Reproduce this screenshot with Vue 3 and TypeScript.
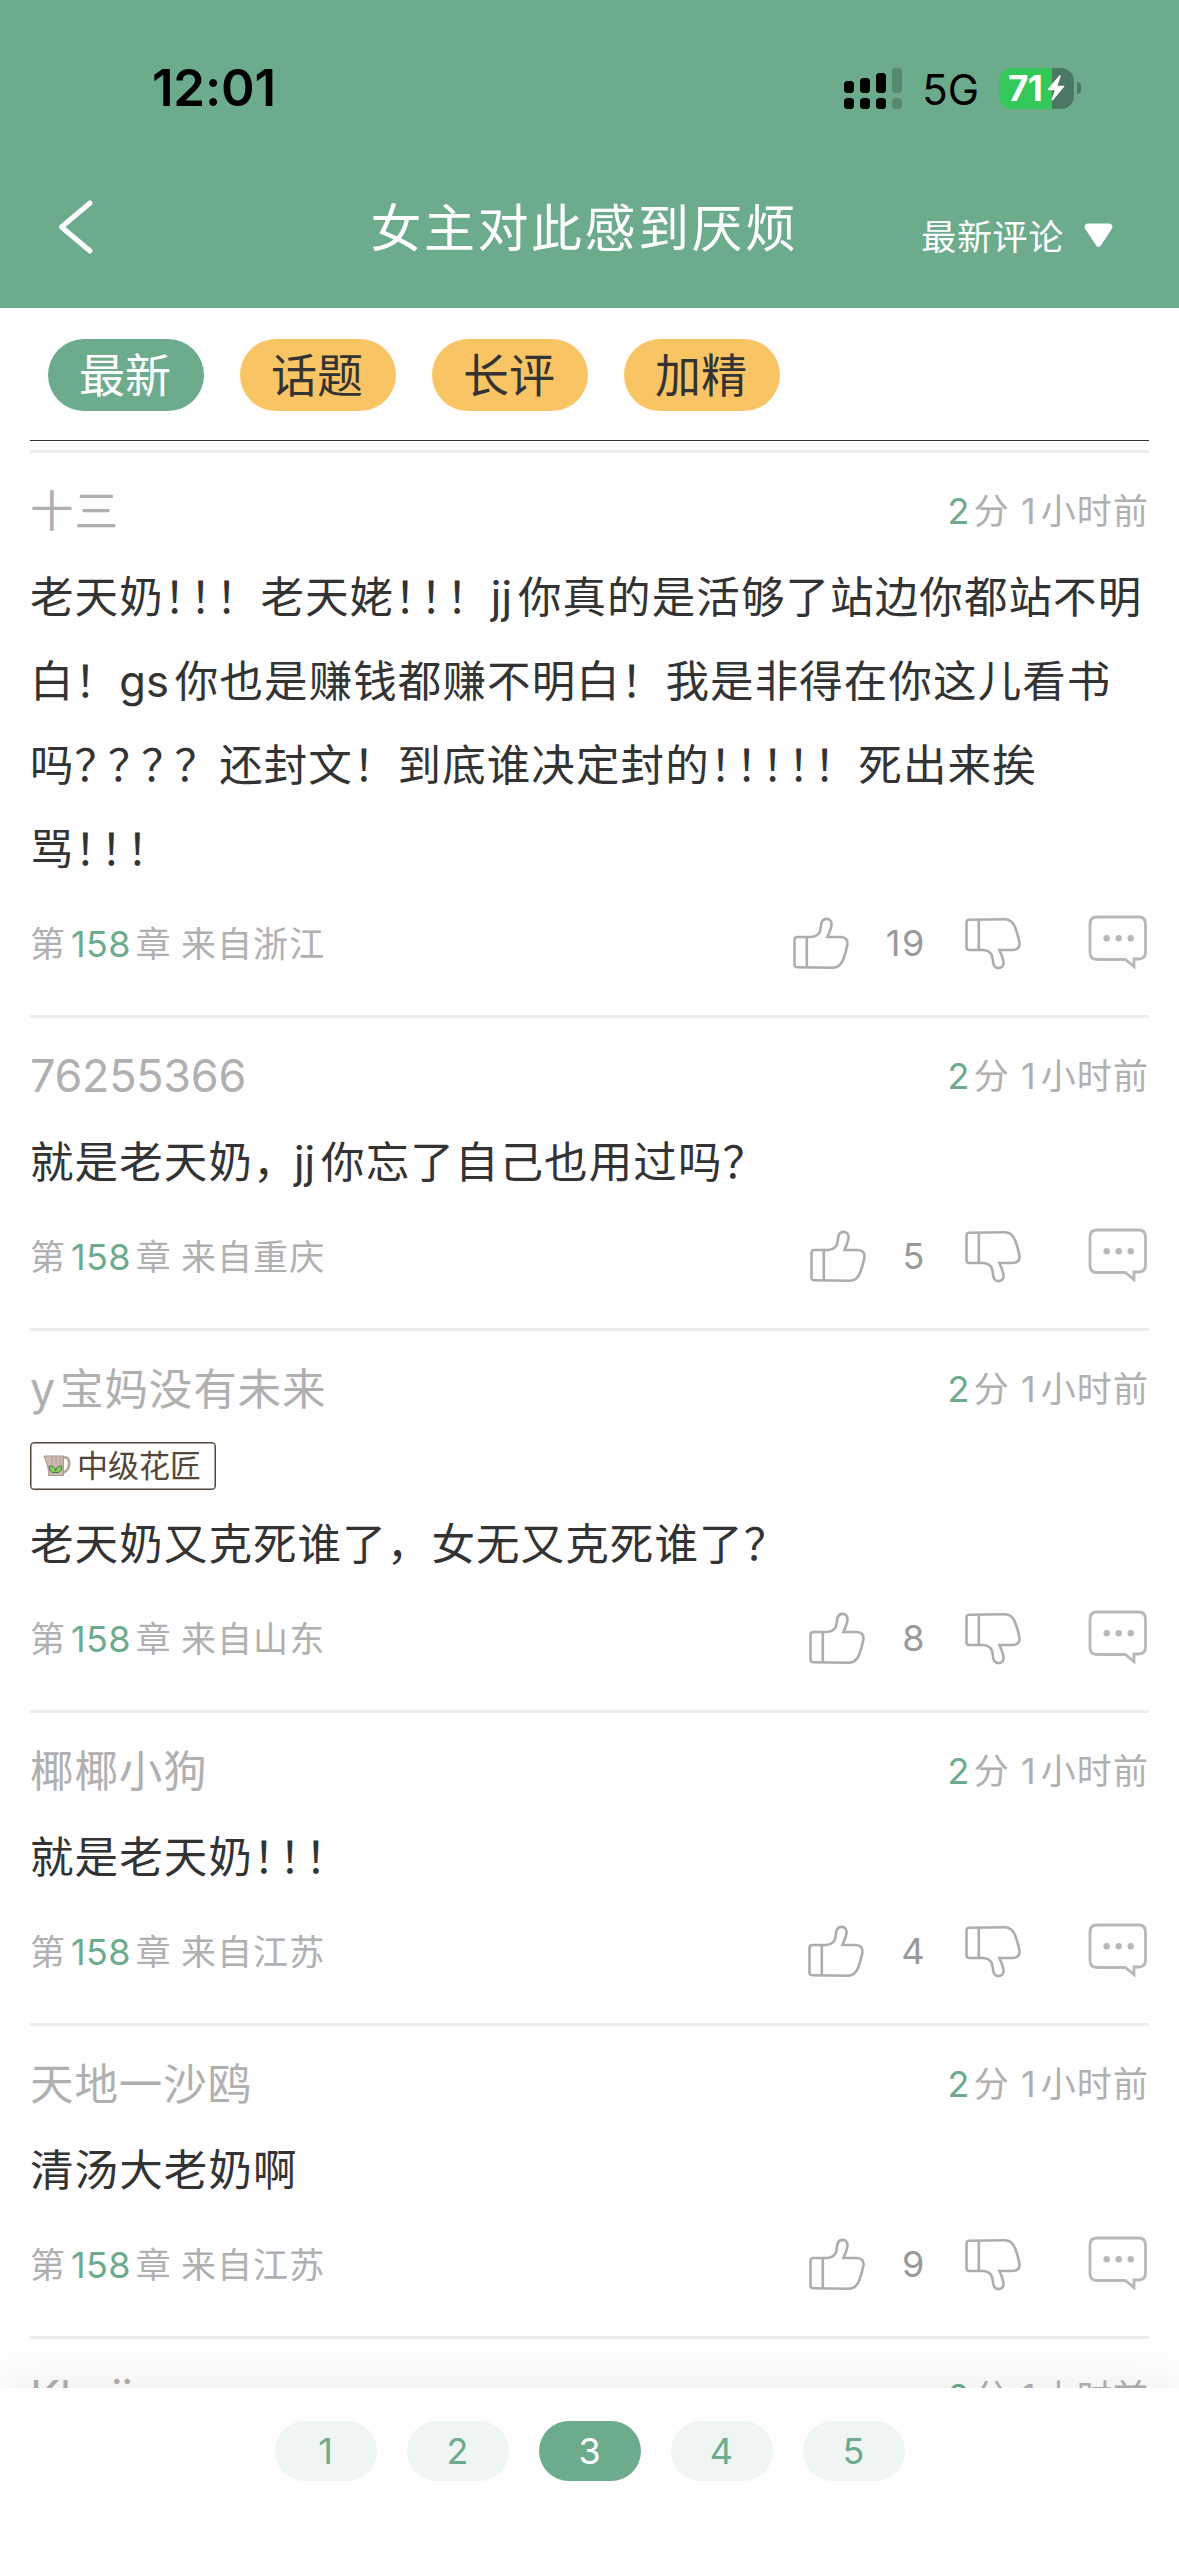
<script setup lang="ts">
interface Comment {
  name: string
  badge?: string
  lines: string[]
  place: string
  likes: number
}

interface Run {
  text: string
  kind: string
}

const tabs: string[] = ['最新', '话题', '长评', '加精']
const activeTab = 0
const pages: number[] = [1, 2, 3, 4, 5]
const currentPage = 3

const comments: Comment[] = [
  {
    name: '十三',
    lines: [
      '老天奶！！！老天姥！！！jj你真的是活够了站边你都站不明',
      '白！gs你也是赚钱都赚不明白！我是非得在你这儿看书',
      '吗？？？？还封文！到底谁决定封的！！！！！死出来挨',
      '骂！！！',
    ],
    place: '浙江',
    likes: 19,
  },
  { name: '76255366', lines: ['就是老天奶，jj你忘了自己也用过吗？'], place: '重庆', likes: 5 },
  {
    name: 'y宝妈没有未来',
    badge: '中级花匠',
    lines: ['老天奶又克死谁了，女无又克死谁了？'],
    place: '山东',
    likes: 8,
  },
  { name: '椰椰小狗', lines: ['就是老天奶！！！'], place: '江苏', likes: 4 },
  { name: '天地一沙鸥', lines: ['清汤大老奶啊'], place: '江苏', likes: 9 },
  { name: 'Khaij', lines: [''], place: '江苏', likes: 0 },
]

// Splits text so repeated full-width marks and Latin words get their own spacing.
function runs(text: string): Run[] {
  const parts =
    text.match(/！+(?=！)|？+(?=？)|，(?=[A-Za-z])|[A-Za-z0-9]+|[^A-Za-z0-9！？，]+|[！？，]/g) ?? []
  return parts.map((part, i) => {
    const next = parts[i + 1] ?? ''
    if (/^[A-Za-z0-9]/.test(part)) return { text: part, kind: 'latin' }
    if (part === '，' && /^[A-Za-z]/.test(next)) return { text: part, kind: 'tight-comma' }
    const repeated = next[0] === part[0]
    if (part[0] === '！' && repeated) return { text: part, kind: 'tight-bang' }
    if (part[0] === '？' && repeated) return { text: part, kind: 'tight-ask' }
    return { text: part, kind: 'plain' }
  })
}
</script>

<template>
  <div class="screen">
    <header class="top">
      <div class="status">
        <span class="clock">12:01</span>
        <div class="indicators">
          <svg class="signal" width="58" height="41" viewBox="0 0 58 41">
            <rect x="0" y="13" width="10" height="12" rx="3.5" />
            <rect x="16" y="10" width="10" height="15" rx="3.5" />
            <rect x="32" y="5" width="10" height="20" rx="3.5" />
            <rect x="48" y="0" width="10" height="25" rx="3.5" opacity=".2" />
            <rect x="0" y="30" width="10" height="11" rx="3.5" />
            <rect x="16" y="30" width="10" height="11" rx="3.5" />
            <rect x="32" y="30" width="10" height="11" rx="3.5" />
            <rect x="48" y="30" width="10" height="11" rx="3.5" opacity=".2" />
          </svg>
          <span class="network">5G</span>
          <div class="battery">
            <div class="cell">
              <span class="level">71</span>
              <svg class="bolt" width="18" height="26" viewBox="0 0 18 26">
                <path d="M12.200 .600.900 14.100c-.4.600 0 1.100.6 1.100h6.300L4.700 24.300c-.3 1 .7 1.500 1.400.7L17.200 11.800c.4-.6 0-1.100-.6-1.100h-6.100L13.600 1.400C13.900.300 12.900-.2 12.200.600z" fill="#fff" />
              </svg>
            </div>
            <div class="nub"></div>
          </div>
        </div>
      </div>
      <div class="bar">
        <svg class="back" width="37" height="56" viewBox="0 0 37 56">
          <path d="M33 4 4.500 28 33 52" fill="none" stroke="#fff" stroke-width="5" stroke-linecap="round" stroke-linejoin="round" />
        </svg>
        <h1 class="title">女主对此感到厌烦</h1>
        <div class="sort">
          <span class="sort-label">最新评论</span>
          <svg width="29" height="25" viewBox="0 0 29 25">
            <path d="M4 .5h21c3 0 4.400 3 2.700 5.600L17 22.200c-1.300 2-3.700 2-5 0L1.300 6.100C-.4 3.500 1 .5 4 .5z" fill="#fff" />
          </svg>
        </div>
      </div>
    </header>

    <nav class="tabs">
      <span v-for="(tab, i) in tabs" :key="tab" class="tab" :class="{ active: i === activeTab }">{{ tab }}</span>
    </nav>

    <main class="list">
      <article v-for="c in comments" :key="c.name" class="comment">
        <div class="head">
          <span class="name"><span v-for="(r, i) in runs(c.name)" :key="i" :class="r.kind">{{ r.text }}</span></span>
          <span class="when"><b>2</b><span class="unit">分</span><span class="one">1</span>小时前</span>
        </div>
        <div v-if="c.badge" class="badge-row">
          <span class="badge">
            <svg width="28" height="22" viewBox="0 0 28 22">
              <path d="M20.500 2.500c4-1 6 2 5.600 6.500-.4 4.500-2.600 7.500-5.600 8.500" fill="none" stroke="#b9a79c" stroke-width="2.800" />
              <path d="M1 1h19.500v19.500H5.500C6 15 4.500 10 1 1z" fill="#cdbbb1" stroke="#a8978d" stroke-width="1" />
              <path d="M9 2v8M13 2v7M17 2v8" stroke="#a8978d" stroke-width=".8" />
              <path d="M12.500 17.500C8.500 18.500 5.800 15.500 6.300 11c4-.5 6 2 6.200 5 .5-3 2.500-5.500 6.200-5 .6 4-2 7.500-6.200 6.500z" fill="#8cc763" stroke="#3e6b31" stroke-width="1" />
            </svg>
            <span>{{ c.badge }}</span>
          </span>
        </div>
        <div class="body">
          <p v-for="(line, n) in c.lines" :key="n"><span v-for="(r, i) in runs(line)" :key="i" :class="r.kind">{{ r.text }}</span></p>
        </div>
        <div class="foot">
          <span class="source">第<b>158</b>章<span class="from">来自{{ c.place }}</span></span>
          <div class="actions">
            <svg width="57" height="53" viewBox="0 0 57 53" class="thumb">
              <path d="M4.500 20H18.500C24 19.500 27.500 16 27.800 10.300 28 5 30 1.900 33.500 1.900s5.500 2.700 4.900 6.600C37.800 12 36 16.500 34.400 20H48c4.500 0 7.200 3 6.400 7.500-.9 5-2.300 10-4.200 15-2 5.300-5.500 8.200-10.700 8.200L4.500 50.300c-2 0-3-1-3-3V23c0-2 1-3 3-3zM13.800 20v30.300" />
            </svg>
            <span class="likes">{{ c.likes }}</span>
            <svg width="57" height="53" viewBox="0 0 57 53" class="thumb down">
              <path d="M4.500 20H18.500C24 19.500 27.500 16 27.800 10.300 28 5 30 1.900 33.500 1.900s5.500 2.700 4.900 6.600C37.800 12 36 16.500 34.400 20H48c4.500 0 7.200 3 6.400 7.500-.9 5-2.300 10-4.200 15-2 5.300-5.500 8.200-10.700 8.200L4.500 50.300c-2 0-3-1-3-3V23c0-2 1-3 3-3zM13.800 20v30.300" />
            </svg>
            <svg width="60" height="54" viewBox="0 0 60 54" class="reply">
              <path d="M9 2h41.500c4.500 0 7 2.500 7 7v28c0 4.500-2.500 7-7 7H46v7.600L37.200 44.500H9c-4.500 0-7-2.500-7-7V9c0-4.500 2.500-7 7-7z" fill="none" stroke="#b8b8b8" stroke-width="2.800" />
              <circle cx="18.700" cy="23.300" r="3.200" />
              <circle cx="30.700" cy="23.300" r="3.200" />
              <circle cx="42.700" cy="23.300" r="3.200" />
            </svg>
          </div>
        </div>
      </article>
    </main>

    <footer class="pager">
      <span v-for="p in pages" :key="p" class="page" :class="{ current: p === currentPage }">{{ p }}</span>
    </footer>
  </div>
</template>

<style>
body {
  background: #fefefe;
}
</style>

<style scoped>
.screen {
  width: 1179px;
  height: 2556px;
  display: flex;
  flex-direction: column;
  overflow: hidden;
  background: #fefefe;
  color: #333;
  font-family: Inter, "Noto Sans CJK SC", sans-serif;
  text-spacing-trim: space-all;
}
.top {
  height: 308px;
  flex: none;
  background: #6dab8d;
}
.status {
  height: 176px;
  display: flex;
  justify-content: space-between;
  padding: 0 98px 0 152px;
  box-sizing: border-box;
  align-items: center;
  color: #000;
}
.clock {
  font-size: 51px;
  font-weight: 600;
  letter-spacing: -0.2px;
  padding-bottom: 2px;
}
.indicators {
  display: flex;
  align-items: center;
}
.network {
  font-size: 42px;
  font-weight: 400;
  letter-spacing: 0;
  line-height: 41px;
  margin: 2px 20px 0 20px;
}
.battery {
  display: flex;
  align-items: center;
}
.cell {
  width: 75px;
  height: 41px;
  box-sizing: border-box;
  border-radius: 13px;
  padding-left: 9px;
  display: flex;
  align-items: center;
  background: linear-gradient(90deg, #34c759 53px, #4c7863 53px);
}
.level {
  width: 39px;
  font-size: 35px;
  font-weight: 700;
  letter-spacing: -0.5px;
  line-height: 41px;
  color: #fff;
}
.nub {
  width: 4px;
  height: 12px;
  margin-left: 3px;
  border-radius: 0 4px 4px 0;
  background: #4c7863;
}
.bar {
  height: 132px;
  display: grid;
  grid-template-columns: 290px 1fr 300px;
  padding: 0 57px;
}
.back {
  margin-top: 23px;
}
.title {
  margin: 14px 0 0;
  text-align: center;
  font-size: 51px;
  line-height: 78px;
  font-weight: 400;
  letter-spacing: 2.500px;
  white-space: nowrap;
  color: #fff;
}
.sort {
  display: flex;
  justify-content: flex-end;
  align-items: center;
  height: 54px;
  margin: 32px 9px 0 0;
  gap: 20px;
  font-size: 35px;
  letter-spacing: 0.7px;
  color: #fff;
}
.sort-label {
  padding-bottom: 2px;
}
.tabs {
  flex: none;
  box-sizing: border-box;
  margin: 0 30px 9px;
  padding: 31px 18px 0;
  display: flex;
  gap: 36px;
  border-bottom: 1px solid #333;
  height: 133px;
}
.tab {
  width: 156px;
  height: 72px;
  border-radius: 36px;
  background: #f9c464;
  font-size: 46px;
  line-height: 72px;
  text-align: center;
  text-indent: -2px;
}
.tab.active {
  background: #6dab8d;
  color: #fff;
}
.list {
  flex: 1;
  min-height: 0;
  overflow: hidden;
  padding: 0 30px;
}
.comment {
  border-top: 3px solid #ececec;
}
.head {
  height: 102px;
  box-sizing: border-box;
  padding-top: 9px;
  display: flex;
  align-items: center;
  justify-content: space-between;
  color: #b0b0b0;
}
.name {
  font-size: 43.5px;
  line-height: 60px;
  letter-spacing: 0.9px;
  padding-top: 5px;
}
.name .latin {
  font-size: 45px;
  letter-spacing: -0.3px;
  margin-right: 5px;
}
.when,
.source {
  font-size: 35px;
  letter-spacing: 1.1px;
  white-space: nowrap;
}
.when b,
.source b {
  font-size: 36px;
  letter-spacing: 0.3px;
  font-weight: 400;
  color: #6dab8d;
  margin: 0 5px;
}
.when b {
  font-size: 36px;
  margin-right: 4px;
}
.one {
  margin: 0 4px 0 11px;
  font-size: 36px;
}
.from {
  margin-left: 9px;
}
.badge-row {
  height: 69px;
  box-sizing: border-box;
  padding-top: 9px;
  display: flex;
}
.badge {
  height: 48px;
  width: 186px;
  box-sizing: border-box;
  border: 1px solid #55463a;
  box-shadow: inset 0 0 0 0.5px #55463a;
  border-radius: 4px;
  padding-left: 12px;
  display: flex;
  align-items: center;
  gap: 6px;
  font-size: 31px;
  line-height: 44px;
  color: #55463a;
}
.body p {
  margin: 0;
  height: 84px;
  line-height: 84px;
  font-size: 43.5px;
  letter-spacing: 1.1px;
  white-space: nowrap;
}
.body .latin {
  letter-spacing: 0;
  margin-right: 6px;
}
.tight-bang {
  letter-spacing: -17.500px;
}
.tight-ask {
  letter-spacing: -10.200px;
}
.tight-comma {
  letter-spacing: -2.500px;
}
.foot {
  height: 124px;
  box-sizing: border-box;
  padding-bottom: 19px;
  display: flex;
  align-items: center;
  justify-content: space-between;
  color: #b0b0b0;
}
.source {
  padding-bottom: 5px;
}
.actions {
  display: flex;
  align-items: center;
  margin-right: 1px;
}
.thumb path {
  fill: none;
  stroke: #adadad;
  stroke-width: 2.600;
}
.thumb.down {
  transform: scaleY(-1);
  margin: 0 66px 0 39px;
}
.likes {
  margin-left: 36px;
  font-size: 36px;
  letter-spacing: 1.600px;
  color: #999;
  padding-bottom: 1px;
}
.reply {
  margin-bottom: 3px;
}
.reply circle {
  fill: #b8b8b8;
}
.pager {
  position: relative;
  height: 168px;
  flex: none;
  box-sizing: border-box;
  padding-top: 33px;
  display: flex;
  justify-content: center;
  gap: 30px;
  background: #fefefe;
  box-shadow: 0 0 50px rgba(0, 0, 0, 0.08);
}
.page {
  width: 102px;
  height: 60px;
  border-radius: 30px;
  background: #eef5f3;
  color: #6dab8d;
  font-size: 36px;
  line-height: 61px;
  text-align: center;
}
.page.current {
  background: #6dab8d;
  color: #fff;
}
</style>
